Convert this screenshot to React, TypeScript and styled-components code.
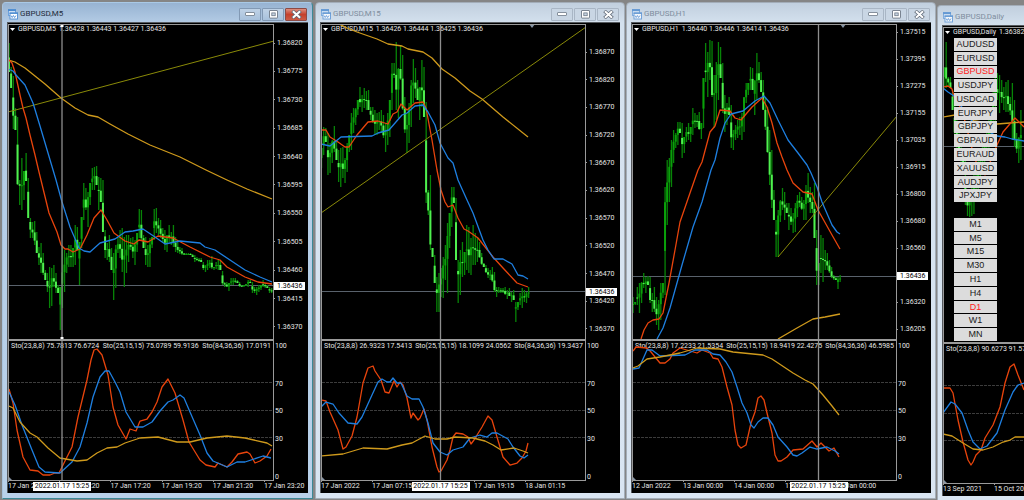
import React from "react";
import styled, { createGlobalStyle, css } from "styled-components";

type Line = string;

interface ChartData {
  title: string;
  quote: string;
  active?: boolean;
  cut?: boolean;
  /* plot areas as [x, y, width, height] */
  mainBox: number[];
  subBox: number[];
  prices: string[];
  pricePad: [number, number];
  price: number;
  cross?: number;
  crossTime?: string;
  shift?: number;
  trend?: Line;
  gold: Line;
  red: Line;
  blue: Line;
  candleStart: number;
  /* high and low of every bar */
  bars: string;
  studies: string[];
  subGold: Line;
  subRed: Line;
  subBlue: Line;
  times: string[];
}

const CHARTS: ChartData[] = [
  {
    title: "GBPUSD,M5",
    quote: "1.36428 1.36443 1.36427 1.36436",
    active: true,
    mainBox: [9, 25, 264, 314],
    subBox: [9, 341, 264, 139],
    prices: ["1.36820", "1.36775", "1.36730", "1.36685", "1.36640", "1.36595", "1.36550", "1.36505", "1.36460", "1.36415", "1.36370"],
    pricePad: [15, 9],
    price: 285.5,
    cross: 62,
    crossTime: "2022.01.17 15:25",
    trend: "8,112 274,41",
    gold: "8,60 15,62 25,68 35,76 45,84 61,98 75,108 88,115 98,117 110,124 128,134 150,145 180,157 206,170 227,180 247,189 272,199",
    red: "9,60 12,63 15,72 20,95 23,108 26,118 30,135 35,155 39,172 49,213 57,232 61,245 65,249 68,249 73,252 80,249 87,235 94,218 101,210 107,220 114,233 125,241 134,244 139,240 148,242 158,236 173,238 190,247 210,257 220,260 227,267 245,277 258,282 272,284",
    blue: "8,69 13,71 16,75 25,85 33,103 40,126 48,153 56,180 62,202 70,227 79,248 84,251 90,252 100,243 115,239 125,232 133,231 143,229 155,237 165,244 180,241 200,243 205,247 215,250 230,260 245,270 260,277 272,282",
    candleStart: 9,
    bars: "43 72,67 88,76 129,108 130,117 185,180 205,158 210,171 200,153 181,178 218,218 238,222 238,221 245,232 253,247 265,243 273,253 275,270 280,273 292,267 308,268 306,265 287,273 293,285 293,287 330,247 308,250 292,253 273,245 267,245 267,248 267,225 265,227 250,242 285,217 248,183 220,188 210,192 227,183 205,168 190,167 190,166 185,177 210,178 202,180 232,230 258,243 260,235 262,248 270,253 300,245 288,237 253,230 258,228 272,237 287,235 273,235 262,238 250,237 258,240 265,233 252,209 238,210 240,235 248,237 265,245 267,238 267,237 248,209 240,208 233,218 235,220 238,228 242,230 250,235 252,225 242,232 245,225 247,237 252,242 253,247 254,248 255,253 255,253 255,253 255,253 255,254 257,255 262,257 261,258 262,258 262,262 270,265 272,260 270,260 268,256 269,267 270,262 269,260 270,260 270,271 285,282 287,282 287,283 291,278 285,278 285,278 283,280 283,282 287,285 287,285 287,284 286,280 287,280 283,282 293,287 293,287 295,285 292,285 290,280 287,283 288,285 288,287 293,288 293",
    studies: ["Sto(23,8,8) 75.7813 76.6724", "Sto(25,15,15) 75.0789 59.9136", "Sto(84,36,36) 17.0191"],
    subGold: "9,406 13,408 20,422 30,433 37,437 48,448 60,458 77,461 87,460 97,453 107,448 117,447 125,443 140,438 158,437 177,442 190,442 207,438 227,436 245,438 267,443 272,446",
    subRed: "9,389 13,403 17,430 23,457 30,470 38,471 43,475 50,475 55,473 59,473 62,467 72,447 78,417 87,380 91,360 94,350 97,349 102,355 108,375 113,407 118,425 126,439 130,429 136,431 140,421 147,419 152,412 157,402 162,387 168,379 175,393 183,420 189,442 200,460 206,465 215,467 218,463 227,467 232,462 238,454 247,452 250,454 255,463 260,461 267,456 271,449",
    subBlue: "9,392 15,405 22,425 32,450 39,467 45,472 60,473 72,462 80,447 87,423 93,397 100,377 105,371 109,371 115,382 120,392 126,412 135,427 143,427 152,422 160,411 168,402 173,400 180,395 184,398 190,412 200,435 207,453 213,461 227,467 237,462 245,462 263,456 271,458",
    times: ["17 Jan 2022", "17 Jan 15:20", "17 Jan 17:20", "17 Jan 19:20", "17 Jan 21:20", "17 Jan 23:20"],
  },
  {
    title: "GBPUSD,M15",
    quote: "1.36426 1.36444 1.36425 1.36436",
    mainBox: [322, 25, 263, 314],
    subBox: [322, 341, 263, 139],
    prices: ["1.36870", "1.36820", "1.36770", "1.36720", "1.36670", "1.36620", "1.36570", "1.36520", "1.36470", "1.36420", "1.36370"],
    pricePad: [24, 7],
    price: 291.5,
    cross: 440.5,
    crossTime: "2022.01.17 15:25",
    shift: 532,
    trend: "321,213 586,27",
    gold: "339,24 347,28 357,32 377,39 388,44 402,46 408,49 423,52 432,58 442,69 455,78 470,91 482,99 503,117 528,137",
    red: "321,130 326,130 330,137 338,142 345,147 349,147 357,135 368,122 378,121 388,124 393,114 397,112 401,104 407,110 415,103 423,102 426,108 432,140 437,170 441,190 445,202 448,207 453,205 458,218 464,229 468,231 478,238 493,257 503,268 517,283 528,287",
    blue: "321,144 330,146 341,137 372,136 378,133 389,130 402,115 407,113 415,106 423,105 428,112 435,125 440,143 448,158 453,163 458,180 467,200 473,213 483,240 488,250 494,259 503,259 512,264 518,275 523,276 528,279",
    candleStart: 321.5,
    bars: "148 168,127 155,128 142,133 175,143 173,140 163,126 152,142 160,150 182,148 187,147 178,158 183,143 172,135 152,113 150,108 133,108 125,100 115,87 107,95 112,88 108,91 110,90 110,107 120,107 123,110 135,113 135,112 130,110 133,115 138,123 152,113 145,100 137,63 110,63 78,42 110,68 118,46 80,55 110,97 133,113 153,103 143,80 127,59 103,68 98,80 100,87 120,60 107,67 117,102 203,190 215,175 250,248 257,255 283,277 312,273 312,268 297,257 298,245 280,223 293,213 248,187 227,187 203,198 260,260 303,250 295,242 277,252 275,225 270,227 273,238 275,225 265,233 265,238 262,242 258,253 265,263 267,265 273,268 278,270 280,267 282,272 292,287 297,287 293,288 293,288 293,287 295,290 299,288 296,292 302,290 300,302 322,302 310,293 305,288 308,290 302,292 303,287 298",
    studies: ["Sto(23,8,8) 26.9323 17.5413", "Sto(25,15,15) 18.1099 24.0562", "Sto(84,36,36) 19.3437"],
    subGold: "321,456 343,454 363,448 387,449 402,445 412,443 425,436 435,439 447,439 455,437 473,438 485,441 493,445 501,450 514,448 523,451 528,453",
    subRed: "321,400 326,401 330,412 338,430 343,449 346,447 352,436 357,417 363,383 368,368 373,366 375,371 381,380 385,392 389,393 394,381 397,387 400,382 403,385 407,398 411,418 413,413 418,420 420,418 424,409 427,420 432,447 437,467 439,472 441,471 447,460 450,450 453,437 456,433 463,434 468,437 471,444 474,440 482,427 488,416 492,420 497,437 503,457 510,465 517,463 522,458 526,451 528,443",
    subBlue: "321,407 326,402 333,404 339,413 348,423 357,424 362,417 372,395 378,382 382,379 387,382 390,382 393,378 397,383 401,383 407,396 412,399 419,399 423,407 428,423 433,443 440,452 447,455 453,450 463,447 470,438 480,435 487,437 492,433 497,433 508,439 513,447 520,456 524,458 528,455",
    times: ["17 Jan 2022", "17 Jan 07:15", "", "17 Jan 19:15", "18 Jan 01:15"],
  },
  {
    title: "GBPUSD,H1",
    quote: "1.36440 1.36446 1.36414 1.36436",
    mainBox: [633, 25, 263, 314],
    subBox: [633, 341, 263, 139],
    prices: ["1.37515", "1.37395", "1.37275", "1.37155", "1.37035", "1.36915", "1.36800", "1.36680", "1.36560", "", "1.36320", "1.36205"],
    pricePad: [4, 7],
    price: 276.5,
    cross: 818.5,
    crossTime: "2022.01.17 15:25",
    shift: 843,
    trend: "778,257 897,116",
    gold: "778,339 797,328 813,319 825,317 840,314",
    red: "641,339 644,330 648,323 653,320 659,319 663,313 669,283 675,250 680,222 690,193 698,170 702,162 710,132 715,126 720,110 730,111 735,118 741,120 752,107 762,98 767,107 772,123 777,143 782,157 787,170 793,183 803,192 812,194 818,210 832,235 840,249",
    blue: "657,339 663,328 670,308 682,265 693,227 702,202 711,170 715,160 720,138 725,123 731,114 743,111 755,101 764,96 770,103 778,120 788,140 798,153 807,165 811,173 817,187 822,202 832,225 837,232 840,234",
    candleStart: 633,
    bars: "297 313,302 305,287 305,283 313,282 303,273 288,277 293,276 285,277 303,293 312,287 312,297 325,300 330,283 320,283 298,187 295,160 225,158 202,140 187,130 163,133 148,122 145,122 133,123 158,137 153,127 142,123 140,127 142,108 135,113 128,115 127,112 130,123 139,78 128,43 82,52 97,40 80,41 97,75 128,62 120,42 100,47 78,63 113,95 132,103 125,97 115,105 148,130 150,125 140,120 138,117 135,113 140,97 132,83 103,83 95,67 90,68 90,80 115,53 100,62 83,72 92,80 110,97 130,107 153,130 185,150 208,190 220,220 257,210 257,200 222,188 210,192 220,203 213,203 230,208 225,213 233,203 232,195 217,192 207,197 210,200 220,185 220,173 203,187 213,192 213,183 238,230 285,263 285,235 273,238 282,250 270,253 270,260 273,267 278,275 280,277 280,277 289,275 282",
    studies: ["Sto(23,8,8) 17.2233 21.5354", "Sto(25,15,15) 18.9419 22.4275", "Sto(84,36,36) 46.5985"],
    subGold: "633,368 638,366 647,359 660,357 680,353 697,348 720,349 733,352 763,355 772,359 793,373 805,380 813,384 823,395 832,406 839,415",
    subRed: "633,351 636,347 647,348 651,352 655,357 660,363 665,363 670,359 673,353 680,348 697,353 702,350 710,353 713,358 718,359 722,367 727,387 732,405 735,430 738,445 741,448 746,445 751,423 755,412 758,398 761,396 764,400 767,413 772,433 775,455 778,461 781,461 787,457 793,450 803,449 812,441 817,447 821,443 829,451 834,448 839,457",
    subBlue: "633,369 639,368 647,350 652,350 660,356 685,355 695,350 707,350 713,354 720,355 726,362 732,372 737,387 742,403 747,413 751,425 754,428 758,422 763,418 768,418 773,425 778,437 787,447 793,455 797,456 802,453 810,447 817,449 827,447 835,451 839,454",
    times: ["12 Jan 2022", "13 Jan 00:00", "14 Jan 00:00", "17 Jan 00:00", "18 Jan 00:00"],
  },
  {
    title: "GBPUSD,Daily",
    quote: "1.36382",
    cut: true,
    mainBox: [944, 28, 80, 314],
    subBox: [944, 344, 80, 139],
    prices: [],
    pricePad: [0, 0],
    price: 146.5,
    gold: "943,117 955,115 975,121 997,124 1010,123 1024,122",
    red: "943,87 948,86 952,89 954,97 962,110 975,160 985,175 997,145 1003,132 1015,118 1019,122 1024,127",
    blue: "943,88 948,92 954,96 961,106 975,125 997,136 1005,137 1012,139 1024,141",
    candleStart: 944,
    bars: "67 87,42 88,77 87,77 88,90 110,100 144,120 150,125 160,140 165,150 172,160 205,190 216,195 217,185 216,175 214,170 200,160 195,150 185,145 175,140 170,130 160,120 152,110 145,90 130,77 123,73 100,75 113,80 103,87 110,82 112,80 112,97 115,83 140,100 147,133 153,137 163,110 160",
    studies: ["Sto(23,8,8) 90.6273 91.5784"],
    subGold: "943,434 952,436 963,443 973,449 983,450 993,447 1003,442 1010,440 1015,437 1024,437",
    subRed: "943,388 950,388 953,393 958,420 963,442 968,460 971,465 973,462 976,455 981,450 985,438 993,425 1000,407 1005,383 1010,367 1014,364 1018,375 1024,390",
    subBlue: "943,413 951,402 955,404 962,413 968,430 973,442 980,449 987,446 997,433 1005,410 1013,392 1018,385 1024,383",
    times: ["13 Sep 2021", "15 Oct 2021"],
  },
];

const SYMBOLS = ["AUDUSD", "EURUSD", "GBPUSD", "USDJPY", "USDCAD", "EURJPY", "GBPJPY", "GBPAUD", "EURAUD", "XAUUSD", "AUDJPY", "JPXJPY"];
const PERIODS = ["M1", "M5", "M15", "M30", "H1", "H4", "D1", "W1", "MN"];

const BAR_STEP = 2.135;

const GlobalStyle = createGlobalStyle`
  * { box-sizing: border-box; }
  body { margin: 0; background: #8c8c8c; font-family: Roboto, "Liberation Sans", sans-serif; }
`;

const Desktop = styled.main`
  display: grid;
  grid-template-columns: 313fr 311fr 311fr 87fr;
  min-height: 100vh;
  padding: 2px 0 1px 2px;
  overflow: hidden;
  background: #858585;
`;

const Frame = styled.section<{ $active?: boolean; $cut?: boolean }>`
  display: flex;
  flex-direction: column;
  min-width: 0;
  margin-right: 1px;
  padding: 0 4px 5px;
  border: 1px solid #a3adb8;
  border-radius: 4px 4px 0 0;
  background: linear-gradient(#c1cfde, #d4e1ee 20px, #d9e5f2);
  ${(p) =>
    p.$active &&
    css`
      margin-right: 2px;
      border-color: #a9c9e6 #3c8896 #3c8896 #a9c4de;
      background: linear-gradient(#97b3d2, #b4cce5 20px, #b9d1ea);
    `}
  ${(p) =>
    p.$cut &&
    css`
      margin: 3px 0 -3px;
      padding-right: 0;
      border-right: 0;
      border-top-right-radius: 0;
    `}
`;

const TitleBar = styled.header`
  display: flex;
  align-items: center;
  height: 19px;
  padding: 3px 1px 0 1px;
  gap: 2px;
`;

const Title = styled.h2<{ $active?: boolean }>`
  flex: 1;
  margin: 0;
  font-size: 8px;
  line-height: 10px;
  font-weight: 400;
  white-space: nowrap;
  color: ${(p) => (p.$active ? "#1f2c3a" : "#7f8e9e")};
`;

const WindowControls = styled.div`
  display: flex;
  gap: 1px;
`;

const ControlButton = styled.button<{ $danger?: boolean; $active?: boolean }>`
  display: flex;
  align-items: center;
  justify-content: center;
  width: 22px;
  height: 13px;
  padding: 0;
  border: 1px solid ${(p) => (p.$active ? "#8299b4" : "#a9b6c5")};
  border-radius: 1px;
  background: ${(p) => (p.$active ? "linear-gradient(#bfd2e6, #a8c1dc)" : "#c9d6e4")};
  ${(p) =>
    p.$danger &&
    p.$active &&
    css`
      border-color: #8d4a45;
      background: linear-gradient(#dc8f80, #c5402c 50%, #cc5a44);
    `}
`;

const Client = styled.div<{ $cut?: boolean }>`
  flex: 1;
  display: grid;
  grid-template-columns: minmax(0, 1fr) ${(p) => (p.$cut ? "0" : "34px")};
  grid-template-rows: 316fr 141fr 12px;
  padding: 2px 0 0 1px;
  overflow: hidden;
  background: #000;
  box-shadow: inset 1px 1px 0 #55595e;
`;

const Plot = styled.div<{ $open?: boolean }>`
  position: relative;
  min-width: 0;
  overflow: hidden;
  border: 1px solid #9a9a9a;
  ${(p) => p.$open && "border-right: 0;"}
`;

const Drawing = styled.svg`
  position: absolute;
  inset: 0;
  width: 100%;
  height: 100%;
`;

const textStyle = css`
  font-size: 7px;
  line-height: 8px;
  white-space: nowrap;
  color: #e6e6e6;
`;

const QuoteLine = styled.div`
  ${textStyle}
  display: flex;
  align-items: center;
  gap: 3px;
  padding-left: 1px;
`;

const StudyLine = styled.div`
  ${textStyle}
  display: flex;
  justify-content: space-between;
  padding: 1px 2px 0;
`;

const PriceAxis = styled.div<{ $top: number; $bottom: number }>`
  ${textStyle}
  position: relative;
  display: flex;
  flex-direction: column;
  justify-content: space-between;
  padding: ${(p) => p.$top}px 0 ${(p) => p.$bottom}px;
`;

const PriceLabel = styled.span`
  display: flex;
  align-items: center;
  gap: 2px;
  height: 8px;
  &::before {
    content: "";
    width: 1px;
    height: 1px;
    background: #9a9a9a;
  }
`;

const PriceTag = styled.span`
  position: absolute;
  left: 0;
  width: 31px;
  height: 8px;
  margin-top: -4px;
  padding-left: 3px;
  background: #fff;
  color: #000;
`;

const LevelAxis = styled.div`
  ${textStyle}
  display: flex;
  flex-direction: column;
  justify-content: space-between;
  padding: 2px 0 0 1px;
`;

const InnerLevels = styled.div`
  display: flex;
  flex-direction: column;
  justify-content: space-between;
  height: 45%;
`;

const TimeAxis = styled.div`
  ${textStyle}
  position: relative;
  display: flex;
`;

const TimeLabel = styled.span`
  flex: 0 0 19.25%;
  width: 0;
  display: flex;
  flex-direction: column;
  &::before {
    content: "";
    width: 1px;
    height: 1px;
    background: #9a9a9a;
  }
`;

const CutTimeLabel = styled(TimeLabel)`
  flex-basis: 51px;
`;

const TimeTag = styled.span`
  position: absolute;
  top: 1px;
  width: 58px;
  height: 9px;
  margin-left: -29px;
  background: #fff;
  color: #000;
  text-align: center;
`;

const SwitchPanel = styled.nav`
  position: absolute;
  top: 10px;
  left: 10px;
  bottom: 1px;
  width: 43px;
  display: flex;
  flex-direction: column;
  gap: 1px;
`;

const SwitchGroup = styled.div<{ $count: number }>`
  flex: ${(p) => p.$count} 1 0;
  display: flex;
  flex-direction: column;
  gap: 1px;
`;

const SwitchGap = styled.div`
  flex: 1 1 0;
`;

const SwitchButton = styled.button<{ $on: boolean }>`
  flex: 1 1 0;
  min-height: 0;
  padding: 0;
  border: 0;
  background: #dcdcdc;
  font: 9px/11px "Liberation Sans", Arial, sans-serif;
  color: ${(p) => (p.$on ? "#ff2020" : "#202020")};
`;

const ChartIcon = ({ active }: { active?: boolean }) => (
  <svg width="10" height="11" viewBox="0 0 10 11" opacity={active ? 1 : 0.8} aria-hidden="true">
    <rect x="0.5" y="0.5" width="7" height="6" fill="#eaf3fc" stroke="#6fa3dc" />
    <path d="M0 1.2h8" stroke="#4c8bd0" strokeWidth="2" />
    <rect x="2" y="4" width="7.5" height="6" fill="#fff" stroke="#5b94d6" />
    <path d="M1.5 4.2h8.5" stroke="#4c8bd0" strokeWidth="1.4" />
    <path d="M3 6.5l1.2 2 1.2-2 1.2 2 1.4-2" fill="none" stroke="#3a7fd0" strokeWidth="0.8" />
  </svg>
);

const MinimizeIcon = () => (
  <svg width="10" height="4" viewBox="0 0 10 4" aria-hidden="true">
    <rect x="0.5" y="0.5" width="9" height="3" rx="0.5" fill="#fff" stroke="#6d7886" strokeWidth="0.8" />
  </svg>
);

const MaximizeIcon = () => (
  <svg width="9" height="9" viewBox="0 0 9 9" aria-hidden="true">
    <rect x="0.5" y="0.5" width="8" height="7.6" rx="0.5" fill="#fff" stroke="#6d7886" strokeWidth="0.9" />
    <rect x="2.8" y="2.9" width="3.4" height="2.8" fill="#c5d3e2" stroke="#6d7886" strokeWidth="0.8" />
  </svg>
);

const CloseIcon = () => (
  <svg width="11" height="9" viewBox="0 0 11 9" aria-hidden="true">
    <path d="M1.4 0.9l8.2 7.2M9.6 0.9L1.4 8.1" stroke="#5f6977" strokeWidth="3.4" />
    <path d="M1.9 1.3l7.2 6.4M9.1 1.3L1.9 7.7" stroke="#fff" strokeWidth="2" />
  </svg>
);

const ArrowSvg = styled.svg`
  flex: none;
`;

const MenuArrow = () => (
  <ArrowSvg width="5" height="3" viewBox="0 0 5 3" aria-hidden="true">
    <path d="M0 0h5L2.5 3z" fill="#fff" />
  </ArrowSvg>
);

const Curve = ({ points, color }: { points: Line; color: string }) => (
  <polyline points={points} fill="none" stroke={color} strokeWidth="1.3" strokeLinejoin="round" vectorEffect="non-scaling-stroke" />
);

const GOLD = "#cf9a1c";
const RED = "#e8440c";
const BLUE = "#1e7fe0";

const clamp = (v: number, lo: number, hi: number) => Math.min(hi, Math.max(lo, v));

const Candles = ({ start, bars }: { start: number; bars: string }) => {
  const ranges = bars.split(",").map((b) => b.split(" ").map(Number));
  const mid = (i: number) => {
    const r = ranges[clamp(i, 0, ranges.length - 1)];
    return (r[0] + r[1]) / 2;
  };
  /* each bar closes past the half way point to the middle of the next one */
  const closeOf = (i: number) => mid(i) + (mid(i + 1) - mid(i)) * 0.8;
  return (
    <g>
      {ranges.map(([high, low], i) => {
        const x = start + i * BAR_STEP;
        const open = clamp(closeOf(i - 1), high, low);
        const close = clamp(closeOf(i), high, low);
        const falling = close > open;
        return (
          <g key={i}>
            <rect x={x - 0.6} y={high} width="1.3" height={low - high} fill="#078407" />
            <rect x={x - 1} y={Math.min(open, close)} width="2" height={Math.max(1, Math.abs(close - open))} fill={falling ? "#4ff04f" : "#0aa00a"} />
          </g>
        );
      })}
    </g>
  );
};

const Crosshair = ({ x, box }: { x?: number; box: number[] }) =>
  x === undefined ? null : (
    <line x1={x} x2={x} y1={box[1]} y2={box[1] + box[3]} stroke="#8e8e8e" strokeWidth="1.3" vectorEffect="non-scaling-stroke" />
  );

const MainPlot = ({ chart }: { chart: ChartData }) => {
  const box = chart.mainBox;
  return (
    <Plot $open={chart.cut}>
      <QuoteLine>
        <MenuArrow />
        <span>{chart.title}</span>
        <span>{chart.quote}</span>
      </QuoteLine>
      <Drawing viewBox={box.join(" ")} preserveAspectRatio="none" aria-hidden="true">
        <line x1={box[0]} x2={box[0] + box[2]} y1={chart.price} y2={chart.price} stroke="#59626c" vectorEffect="non-scaling-stroke" />
        <Candles start={chart.candleStart} bars={chart.bars} />
        {chart.trend && <polyline points={chart.trend} fill="none" stroke="#8a8a08" vectorEffect="non-scaling-stroke" />}
        <Curve points={chart.gold} color={GOLD} />
        <Curve points={chart.red} color={RED} />
        <Curve points={chart.blue} color={BLUE} />
        <Crosshair x={chart.cross} box={box} />
        {chart.shift && <path d={`M${chart.shift - 3} ${box[1] - 1}h6l-3 4z`} fill="#8795a6" />}
        {chart.active && chart.cross && (
          <g fill="#fff">
            <rect x={chart.cross - 1.5} y={box[1] - 1} width="3" height="3" />
            <rect x={chart.cross - 1.5} y={box[1] + box[3] - 2} width="3" height="3" />
          </g>
        )}
      </Drawing>
      {chart.cut && (
        <SwitchPanel aria-label="Chart switcher">
          <SwitchGroup $count={SYMBOLS.length}>
            {SYMBOLS.map((s) => (
              <SwitchButton key={s} type="button" $on={s === "GBPUSD"} aria-pressed={s === "GBPUSD"}>
                {s}
              </SwitchButton>
            ))}
          </SwitchGroup>
          <SwitchGap />
          <SwitchGroup $count={PERIODS.length}>
            {PERIODS.map((s) => (
              <SwitchButton key={s} type="button" $on={s === "D1"} aria-pressed={s === "D1"}>
                {s}
              </SwitchButton>
            ))}
          </SwitchGroup>
        </SwitchPanel>
      )}
    </Plot>
  );
};

const StudyPlot = ({ chart }: { chart: ChartData }) => {
  const box = chart.subBox;
  const [x, y, w, h] = box;
  return (
    <Plot $open={chart.cut}>
      <StudyLine>
        {chart.studies.map((s) => (
          <span key={s}>{s}</span>
        ))}
      </StudyLine>
      <Drawing viewBox={box.join(" ")} preserveAspectRatio="none" aria-hidden="true">
        {[0.3, 0.5, 0.7].map((level) => (
          <line
            key={level}
            x1={x}
            x2={x + w}
            y1={Math.round(y + h * level) - 0.5}
            y2={Math.round(y + h * level) - 0.5}
            stroke="#3c3c3c"
            strokeDasharray="3 1"
            vectorEffect="non-scaling-stroke"
          />
        ))}
        <Curve points={chart.subRed} color={RED} />
        <Curve points={chart.subBlue} color={BLUE} />
        <Curve points={chart.subGold} color={GOLD} />
        <Crosshair x={chart.cross} box={box} />
        <path d={`M${x} ${y + h}v-3l3 3z`} fill="#8795a6" />
      </Drawing>
    </Plot>
  );
};

const percent = (value: number, from: number, size: number) => `${((value - from) / size) * 100}%`;

const ChartWindow = ({ chart }: { chart: ChartData }) => {
  const [x, y, w, h] = chart.mainBox;
  const Label = chart.cut ? CutTimeLabel : TimeLabel;
  return (
    <Frame $active={chart.active} $cut={chart.cut} aria-label={chart.title}>
      <TitleBar>
        <ChartIcon active={chart.active} />
        <Title $active={chart.active}>{chart.title}</Title>
        {!chart.cut && (
          <WindowControls>
            <ControlButton type="button" $active={chart.active} aria-label="Minimize">
              <MinimizeIcon />
            </ControlButton>
            <ControlButton type="button" $active={chart.active} aria-label="Maximize">
              <MaximizeIcon />
            </ControlButton>
            <ControlButton type="button" $active={chart.active} $danger aria-label="Close">
              <CloseIcon />
            </ControlButton>
          </WindowControls>
        )}
      </TitleBar>
      <Client $cut={chart.cut}>
        <MainPlot chart={chart} />
        <PriceAxis $top={chart.pricePad[0]} $bottom={chart.pricePad[1]}>
          {chart.prices.map((p, i) => (
            <PriceLabel key={i}>{p}</PriceLabel>
          ))}
          {!chart.cut && <PriceTag style={{ top: percent(chart.price, y - 1, h + 2) }}>1.36436</PriceTag>}
        </PriceAxis>
        <StudyPlot chart={chart} />
        <LevelAxis>
          {!chart.cut && (
            <>
              <span>100</span>
              <InnerLevels>
                <span>70</span>
                <span>50</span>
                <span>30</span>
              </InnerLevels>
              <span>0</span>
            </>
          )}
        </LevelAxis>
        <TimeAxis>
          {chart.times.map((t, i) => (
            <Label key={i}>{t}</Label>
          ))}
          {chart.cross && <TimeTag style={{ left: percent(chart.cross, x - 1, w + 2) }}>{chart.crossTime}</TimeTag>}
        </TimeAxis>
      </Client>
    </Frame>
  );
};

export default function App() {
  return (
    <>
      <GlobalStyle />
      <Desktop>
        {CHARTS.map((c) => (
          <ChartWindow key={c.title} chart={c} />
        ))}
      </Desktop>
    </>
  );
}
